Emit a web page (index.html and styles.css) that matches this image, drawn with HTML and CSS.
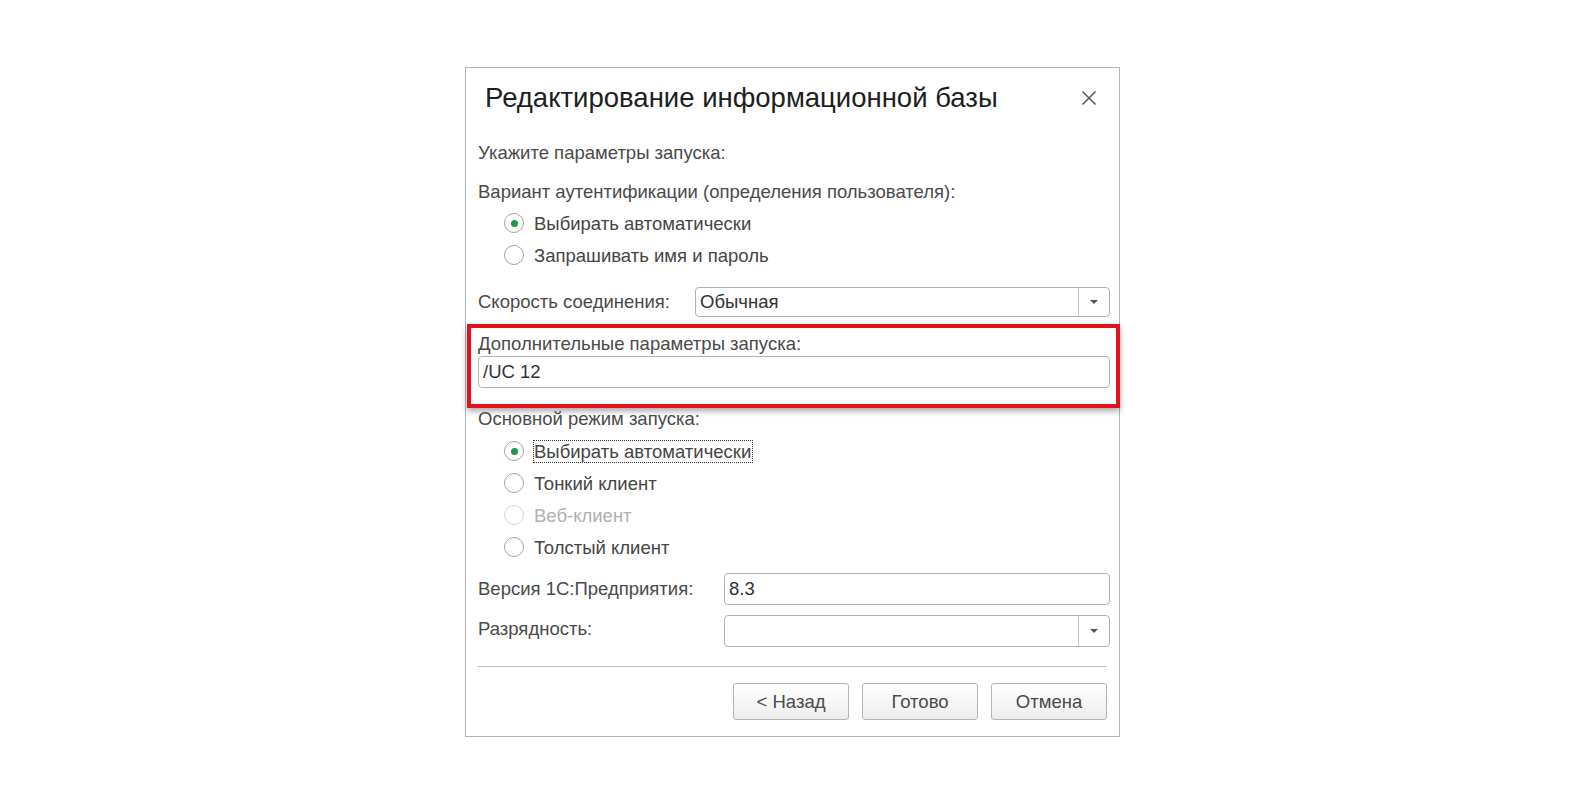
FILE: index.html
```html
<!DOCTYPE html>
<html lang="ru">
<head>
<meta charset="utf-8">
<title>Редактирование информационной базы</title>
<link rel="stylesheet" href="styles.css">
</head>
<body>
<div class="page">
  <div class="dialog">
    <div class="header">
      <div class="title">Редактирование информационной базы</div>
      <div class="close">
        <svg width="16" height="16" viewBox="0 0 16 16"><path d="M1.5 1.5 L14.5 14.5 M14.5 1.5 L1.5 14.5" stroke="#5a5a5a" stroke-width="1.6" fill="none"/></svg>
      </div>
    </div>
    <div class="body">
      <div class="text t1">Укажите параметры запуска:</div>
      <div class="text t2">Вариант аутентификации (определения пользователя):</div>
      <div class="radios r1">
        <div class="radio"><span class="dot checked"></span><span class="rlabel">Выбирать автоматически</span></div>
        <div class="radio"><span class="dot"></span><span class="rlabel">Запрашивать имя и пароль</span></div>
      </div>
      <div class="row speed">
        <div class="label">Скорость соединения:</div>
        <div class="select s-speed">
          <div class="value">Обычная</div>
          <div class="btn"><span class="tri"></span></div>
        </div>
      </div>
      <div class="highlight">
        <div class="text">Дополнительные параметры запуска:</div>
        <div class="input wide">/UC 12</div>
      </div>
      <div class="text t3">Основной режим запуска:</div>
      <div class="radios r2">
        <div class="radio"><span class="dot checked"></span><span class="rlabel focus">Выбирать автоматически</span></div>
        <div class="radio"><span class="dot"></span><span class="rlabel">Тонкий клиент</span></div>
        <div class="radio disabled"><span class="dot"></span><span class="rlabel">Веб-клиент</span></div>
        <div class="radio"><span class="dot"></span><span class="rlabel">Толстый клиент</span></div>
      </div>
      <div class="row version">
        <div class="label">Версия 1С:Предприятия:</div>
        <div class="input field">8.3</div>
      </div>
      <div class="row bits">
        <div class="label top">Разрядность:</div>
        <div class="select field s-bits">
          <div class="value"></div>
          <div class="btn"><span class="tri"></span></div>
        </div>
      </div>
      <div class="footer">
        <div class="sep"></div>
        <div class="buttons">
          <div class="button">&lt; Назад</div>
          <div class="button">Готово</div>
          <div class="button">Отмена</div>
        </div>
      </div>
    </div>
  </div>
</div>
</body>
</html>
```

FILE: styles.css
```css
* { box-sizing: border-box; }
html, body { margin: 0; padding: 0; background: #ffffff; }
body { font-family: "Liberation Sans", Arial, sans-serif; color: #4a4a4a; }

.page { display: flex; justify-content: center; padding-top: 67px; padding-right: 3px; }

.dialog {
  width: 655px;
  height: 670px;
  border: 1px solid #b4b4b4;
  background: #fff;
  display: flex;
  flex-direction: column;
}

.header {
  height: 60px;
  display: flex;
  align-items: center;
  justify-content: space-between;
  padding: 0 22px 0 19px;
}
.title { font-size: 27.5px; color: #1e1e1e; line-height: 30px; white-space: nowrap; }
.close { width: 16px; height: 16px; display: flex; }

.body { padding: 0 9px 0 12px; display: flex; flex-direction: column; }

.text { font-size: 18.5px; line-height: 20px; height: 20px; white-space: nowrap; }
.t1 { margin-top: 15px; }
.t2 { margin-top: 19px; }
.t3 { margin-top: 1px; }

.radios { display: flex; flex-direction: column; padding-left: 26px; }
.r1 { margin-top: 5px; }
.r2 { margin-top: 6px; }
.radio { height: 32px; display: flex; align-items: center; font-size: 18.5px; color: #454545; white-space: nowrap; }
.dot {
  width: 20px; height: 20px; border-radius: 50%;
  border: 1px solid #a2a2a2;
  background: #fff;
  display: flex; align-items: center; justify-content: center;
  margin-right: 9px;
  flex: none;
}
.dot.checked::after {
  content: ""; width: 7px; height: 7px; border-radius: 50%; background: #1d9a4e;
}
.rlabel { line-height: 21px; border: 1px solid transparent; padding: 0 1px 0 0; }
.rlabel.focus { border: 1px dotted #333; }
.radio.disabled { color: #b0b0b0; }
.radio.disabled .dot { border-color: #d8d8d8; }

.row { display: flex; align-items: center; }
.label { font-size: 18.5px; line-height: 20px; white-space: nowrap; }
.speed { margin-top: 16px; }
.speed .label { width: 217px; }
.version { margin-top: 10px; }
.bits { margin-top: 10px; align-items: flex-start; }
.version .label, .bits .label { width: 246px; }
.bits .label { padding-top: 4px; }

.select {
  display: flex; height: 30px;
  border: 1px solid #b2b2b2; border-radius: 4px;
  background: #fff;
  flex: 1;
}
.select .value { flex: 1; font-size: 18.5px; color: #333; padding-left: 4px; line-height: 28px; }
.select .btn {
  width: 31px; border-left: 1px solid #c4c4c4;
  display: flex; align-items: center; justify-content: center;
}
.tri {
  width: 0; height: 0;
  border-left: 4px solid transparent; border-right: 4px solid transparent;
  border-top: 4px solid #555;
}
.s-bits { height: 32px; }

.input {
  height: 32px; border: 1px solid #b2b2b2; border-radius: 4px;
  font-size: 18.5px; color: #333; padding-left: 4px; line-height: 30px;
  background: #fff;
}
.field { flex: 1; }

.highlight {
  margin: 7px -10px 0 -11px;
  border: 4px solid #e3111b;
  box-shadow: 0 3px 6px rgba(0, 0, 0, 0.35);
  padding: 6px 6px 14px 7px;
  display: flex; flex-direction: column;
  height: 84px;
}
.highlight .input { margin-top: 2px; }

.footer { margin-right: 3px; display: flex; flex-direction: column; }
.sep { height: 1px; background: #b8b8b8; margin-top: 19px; }
.buttons { display: flex; justify-content: flex-end; gap: 13px; margin-top: 16px; }
.button {
  width: 116px; height: 37px;
  border: 1px solid #b4b4b4; border-radius: 3px;
  background: linear-gradient(#ffffff, #ededed);
  font-size: 18.5px; color: #4a4a4a;
  display: flex; align-items: center; justify-content: center;
}
```
